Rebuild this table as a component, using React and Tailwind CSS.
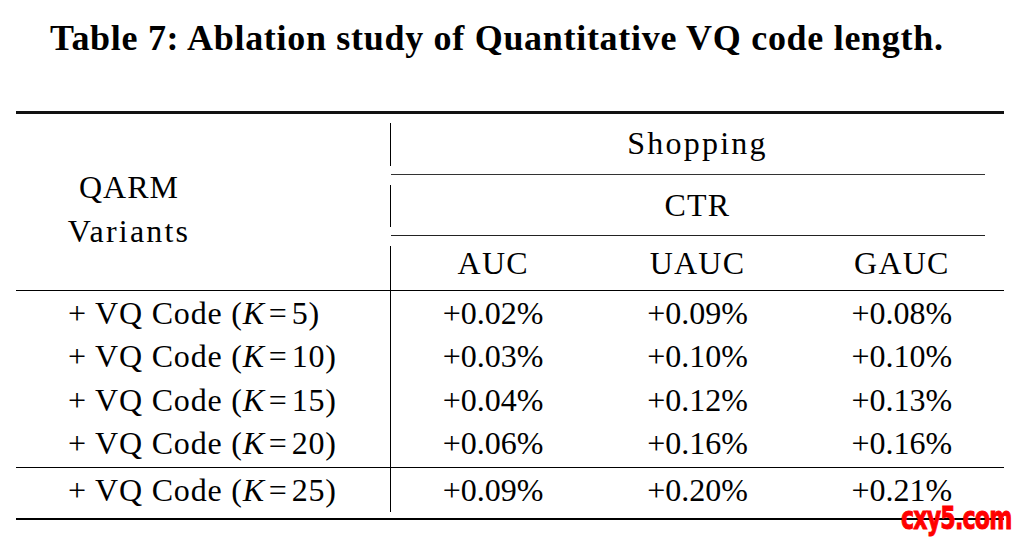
import React from "react";

const serif = { fontFamily: '"Liberation Serif", "Times New Roman", serif' };

function Variant({ k }) {
  return (
    <span className="tracking-[0.8px]">
      + VQ Code (<i>K</i>
      <span className="mx-[4px]">=</span>
      {k})
    </span>
  );
}

const rows = [
  ["5", "+0.02%", "+0.09%", "+0.08%"],
  ["10", "+0.03%", "+0.10%", "+0.10%"],
  ["15", "+0.04%", "+0.12%", "+0.13%"],
  ["20", "+0.06%", "+0.16%", "+0.16%"],
];
const last = ["25", "+0.09%", "+0.20%", "+0.21%"];

function ValueRow({ r, h }) {
  return (
    <div className={`flex ${h} items-center leading-[30px]`}>
      <div className="flex-1 text-center">{r[1]}</div>
      <div className="flex-1 text-center">{r[2]}</div>
      <div className="flex-1 text-center">{r[3]}</div>
    </div>
  );
}

export default function App() {
  return (
    <div
      className="relative w-[1020px] h-[537px] bg-white text-black overflow-hidden"
      style={serif}
    >
      <div className="h-[111px] pt-[18px] pl-[50px]">
        <div className="text-[36px] leading-[40px] font-bold tracking-[0.7px] whitespace-nowrap">
          Table 7: Ablation study of Quantitative VQ code length.
        </div>
      </div>

      <div className="mx-[16px] text-[32px]">
        <div className="h-[3px] bg-[#111]" />

        {/* header */}
        <div className="flex h-[176px]">
          <div className="w-[374px]">
            <div className="w-[226px] pt-[51px] text-center leading-[44px]">
              <div className="tracking-[1px]">QARM</div>
              <div className="tracking-[2.2px]">Variants</div>
            </div>
          </div>
          <div className="flex-1 flex flex-col">
            <div className="flex h-[60px]">
              <div className="w-px bg-black mt-[9px] h-[43px]" />
              <div className="flex-1 flex items-center justify-center leading-[44px] tracking-[2.2px] mt-[-3px]">
                Shopping
              </div>
            </div>
            <div className="h-px w-[594px] ml-px bg-[#333]" />
            <div className="flex h-[60px]">
              <div className="w-px bg-black mt-[10px] h-[42px]" />
              <div className="flex-1 flex items-center justify-center leading-[44px] tracking-[1.2px]">
                CTR
              </div>
            </div>
            <div className="h-px w-[594px] ml-px bg-[#222]" />
            <div className="flex flex-1">
              <div className="w-px bg-black mt-[10px]" />
              <div className="flex-1 flex items-center leading-[44px] tracking-[1.2px]">
                <div className="flex-1 text-center">AUC</div>
                <div className="flex-1 text-center">UAUC</div>
                <div className="flex-1 text-center">GAUC</div>
              </div>
            </div>
          </div>
        </div>

        <div className="h-px bg-black" />

        {/* body */}
        <div className="flex h-[221px]">
          <div className="w-[374px] flex flex-col">
            {rows.map((r) => (
              <div key={r[0]} className="h-[43.5px] flex items-center pl-[52px] leading-[44px] whitespace-nowrap">
                <Variant k={r[0]} />
              </div>
            ))}
            <div className="h-[2px]" />
            <div className="h-px bg-black" />
            <div className="h-[44px] flex items-center pl-[52px] leading-[44px] whitespace-nowrap">
              <Variant k={last[0]} />
            </div>
          </div>
          <div className="w-px bg-black" />
          <div className="flex-1 flex flex-col">
            {rows.map((r) => (
              <ValueRow key={r[0]} r={r} h="h-[43.5px]" />
            ))}
            <div className="h-[2px]" />
            <div className="h-px bg-black" />
            <ValueRow r={last} h="h-[44px]" />
          </div>
        </div>
        <div className="h-[6px]" />
        <div className="h-[2px] bg-black" />
      </div>

      <div
        className="absolute left-[901px] top-[507px] text-[29px] leading-[22px] font-bold text-[#ff0000] tracking-[-1px] scale-x-[0.85] scale-y-[1.1] origin-left whitespace-nowrap [-webkit-text-stroke:0.8px_#ff0000]"
        style={{ fontFamily: '"DejaVu Sans", "Liberation Sans", sans-serif', fontStretch: "condensed" }}
      >
        cxy5.com
      </div>
    </div>
  );
}
